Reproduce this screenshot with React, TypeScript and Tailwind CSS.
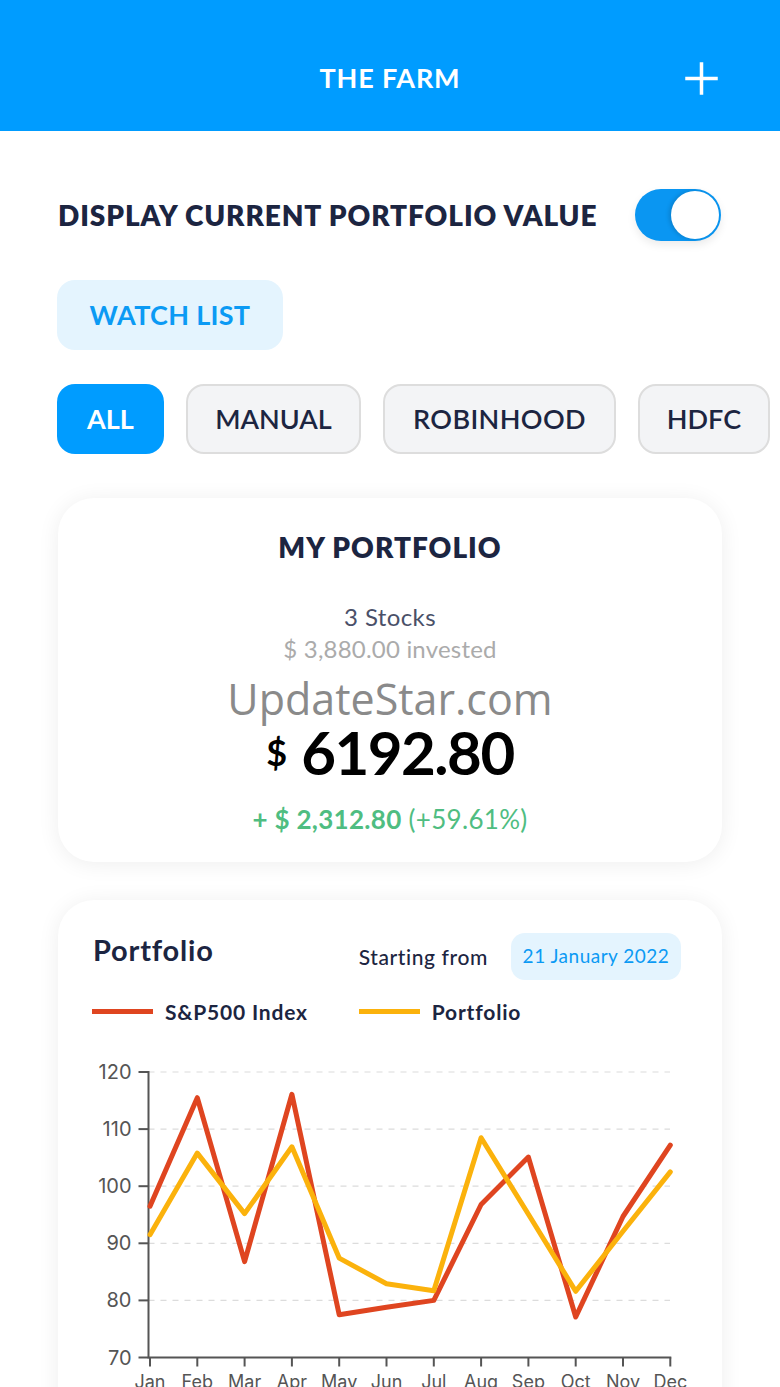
import React from "react";

const months = ["Jan","Feb","Mar","Apr","May","Jun","Jul","Aug","Sep","Oct","Nov","Dec"];
const sp = [96.5,115.5,86.8,116.1,77.5,78.8,80,96.8,105.1,77.1,94.7,107.2];
const pf = [91.5,105.8,95.2,106.9,87.4,82.9,81.7,108.5,95.1,81.6,92.1,102.5];

// svg coordinates relative to card left (page x 58) and svg top (page y 1050)
const X0 = 150 - 58;
const DX = 47.3;
const yOf = (v: number) => (1356.5 - 1050) - (v - 70) * 5.71;
const xOf = (i: number) => X0 + i * DX;
const pts = (arr: number[]) => arr.map((v, i) => `${xOf(i).toFixed(1)},${yOf(v).toFixed(1)}`).join(" ");

function Chart() {
  const axisX = 148.5 - 58;
  const grid = [120, 110, 100, 90, 80];
  return (
    <svg width="664" height="340" viewBox="0 0 664 340" className="block">
      {grid.map((g) => (
        <line key={g} x1={axisX} x2={670 - 58} y1={yOf(g)} y2={yOf(g)} stroke="#dcdcdc" strokeWidth="1.2" strokeDasharray="6 6" />
      ))}
      {[120,110,100,90,80,70].map((g) => (
        <g key={g}>
          <line x1={axisX - 10} x2={axisX} y1={yOf(g)} y2={yOf(g)} stroke="#555" strokeWidth="2" />
          <text x={axisX - 17} y={yOf(g) + 7} textAnchor="end" fontSize="20" fill="#555" fontFamily="Inter, 'Liberation Sans', sans-serif">{g}</text>
        </g>
      ))}
      <line x1={axisX} x2={axisX} y1={yOf(120) - 1} y2={yOf(70) + 1} stroke="#555" strokeWidth="2" />
      <line x1={axisX} x2={xOf(11) + 1} y1={yOf(70)} y2={yOf(70)} stroke="#555" strokeWidth="2" />
      {months.map((m, i) => (
        <g key={m}>
          <line x1={xOf(i)} x2={xOf(i)} y1={yOf(70)} y2={yOf(70) + 9} stroke="#555" strokeWidth="2" />
          <text x={xOf(i)} y={yOf(70) + 30} textAnchor="middle" fontSize="18" fill="#555" fontFamily="Inter, 'Liberation Sans', sans-serif">{m}</text>
        </g>
      ))}
      <polyline points={pts(sp)} fill="none" stroke="#df4520" strokeWidth="5" strokeLinejoin="round" strokeLinecap="round" />
      <polyline points={pts(pf)} fill="none" stroke="#fbb20c" strokeWidth="5" strokeLinejoin="round" strokeLinecap="round" />
    </svg>
  );
}

export default function App() {
  const font = { fontFamily: "Lato, 'Noto Sans', sans-serif" };
  return (
    <div className="w-[780px] h-[1387px] overflow-hidden bg-white" style={font}>
      {/* Header */}
      <div className="h-[131px] bg-[#009cff] flex items-center justify-center relative pt-[26px]">
        <span className="text-white font-bold text-[27px] tracking-[0.8px]">THE FARM</span>
        <svg className="absolute left-[685px] top-[62px]" width="33" height="33" viewBox="0 0 33 33">
          <path d="M16.5 2v29M2 16.5h29" stroke="white" strokeWidth="3.5" strokeLinecap="square" />
        </svg>
      </div>

      {/* Toggle row */}
      <div className="flex items-center justify-between pl-[58px] pr-[59px] mt-[58px]">
        <span className="text-[#1c2541] font-extrabold text-[28px] leading-none tracking-[0.9px]">DISPLAY CURRENT PORTFOLIO VALUE</span>
        <div className="w-[86px] h-[52px] rounded-full bg-[#0a96f2] relative shadow-[0_4px_8px_rgba(0,0,0,0.08)]">
          <div className="absolute right-[2px] top-[2px] w-[48px] h-[48px] rounded-full bg-white shadow-[-2px_0_4px_rgba(0,0,0,0.15)]" />
        </div>
      </div>

      {/* Watch list */}
      <div className="pl-[57px] mt-[39px]">
        <div className="inline-flex items-center justify-center w-[226px] h-[70px] rounded-[18px] bg-[#e4f4fe] text-[#0b9af4] font-bold text-[27px] tracking-[0.3px]">
          WATCH LIST
        </div>
      </div>

      {/* Chips */}
      <div className="flex gap-[22px] pl-[57px] mt-[34px] whitespace-nowrap">
        <div className="w-[107px] h-[70px] rounded-[18px] bg-[#009cff] text-white font-bold text-[27px] flex items-center justify-center shrink-0">ALL</div>
        <div className="w-[175px] h-[70px] rounded-[18px] bg-[#f3f4f6] border-2 border-[#dddddd] text-[#1c2541] font-semibold text-[27px] flex items-center justify-center shrink-0">MANUAL</div>
        <div className="w-[233px] h-[70px] rounded-[18px] bg-[#f3f4f6] border-2 border-[#dddddd] text-[#1c2541] font-semibold text-[27px] tracking-[0.4px] flex items-center justify-center shrink-0">ROBINHOOD</div>
        <div className="w-[132px] h-[70px] rounded-[18px] bg-[#f3f4f6] border-2 border-[#dddddd] text-[#1c2541] font-semibold text-[27px] flex items-center justify-center shrink-0">HDFC</div>
      </div>

      {/* Portfolio card */}
      <div className="mx-[58px] mt-[44px] h-[364px] rounded-[36px] bg-white shadow-[0_2px_22px_rgba(0,0,0,0.07)] flex flex-col items-center">
        <div className="mt-[35px] text-[#1c2541] font-extrabold text-[28px] leading-none tracking-[1px]">MY PORTFOLIO</div>
        <div className="mt-[44px] text-[#4a5068] text-[24px] leading-none tracking-[0.4px]">3 Stocks</div>
        <div className="mt-[8px] text-[#ababab] text-[24px] leading-none tracking-[0.2px]">$ 3,880.00 invested</div>
        <div className="mt-[16px] text-[#8a8a8a] text-[43px] leading-none" style={{ fontFamily: "'Open Sans', sans-serif" }}>UpdateStar.com</div>
        <div className="flex items-center text-black leading-none mt-[2px]">
          <span className="font-bold text-[36px] mr-[14px]">$</span>
          <span className="font-bold text-[60px] tracking-[-1.5px]">6192.80</span>
        </div>
        <div className="mt-[24px] text-[#4fbd81] text-[26px] leading-none tracking-[0.3px]">
          <span className="font-bold">+ $ 2,312.80</span> <span>(+59.61%)</span>
        </div>
      </div>

      {/* Chart card */}
      <div className="mx-[58px] mt-[38px] h-[600px] rounded-[36px] bg-white shadow-[0_2px_22px_rgba(0,0,0,0.07)]">
        <div className="flex items-start pt-[33px] pl-[35px] pr-[41px]">
          <span className="mt-[2px] text-[#1c2541] font-bold text-[29px] leading-none tracking-[0.8px]">Portfolio</span>
          <span className="ml-auto self-center text-[#1c2541] text-[21px] font-medium leading-none mr-[23px] tracking-[0.6px]">Starting from</span>
          <span className="h-[47px] w-[170px] rounded-[14px] bg-[#e4f4fe] text-[#0b9af4] text-[19px] tracking-[0.5px] flex items-center justify-center">21 January 2022</span>
        </div>
        <div className="flex items-center pl-[34px] mt-[21px]">
          <span className="w-[61px] h-[5px] bg-[#df4520]" />
          <span className="ml-[12px] text-[#1c2541] font-bold text-[21px] leading-none tracking-[0.8px]">S&amp;P500 Index</span>
          <span className="ml-[51px] w-[61px] h-[5px] bg-[#fbb20c]" />
          <span className="ml-[12px] text-[#1c2541] font-bold text-[21px] leading-none tracking-[0.8px]">Portfolio</span>
        </div>
        <div className="mt-[29px]">
          <Chart />
        </div>
      </div>
    </div>
  );
}
